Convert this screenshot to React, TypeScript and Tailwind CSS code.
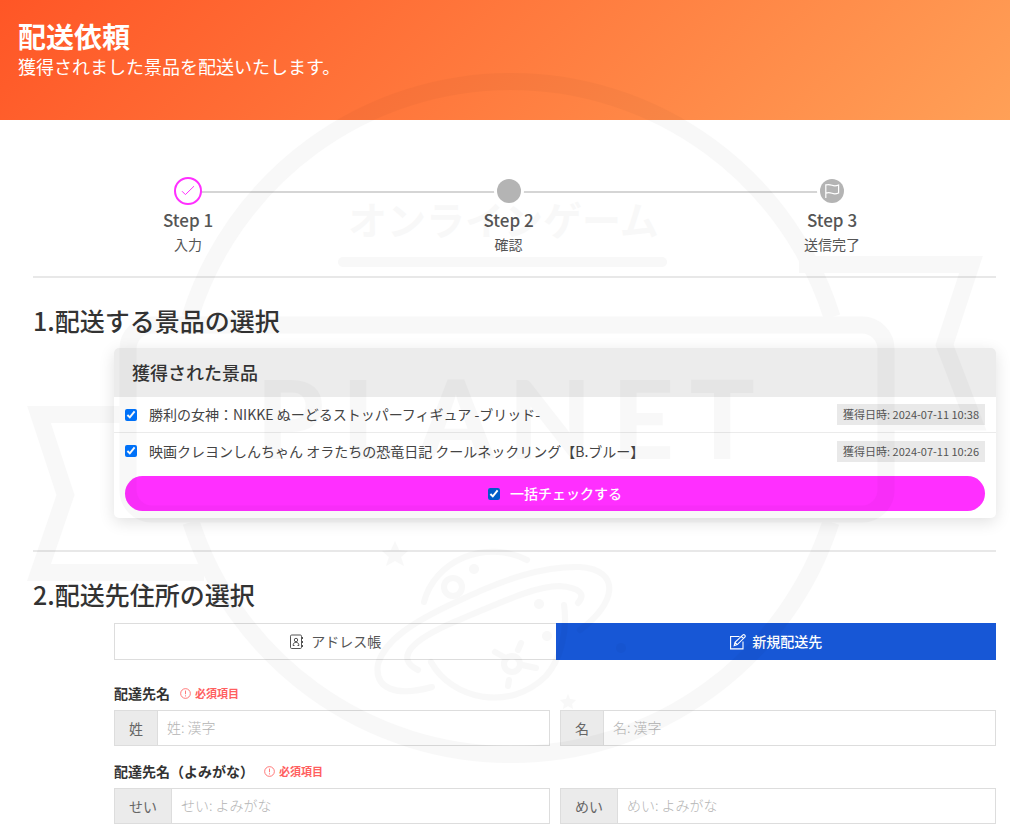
import React, { useState } from "react";

const prizes = [
  { id: "nikke", name: "勝利の女神：NIKKE ぬーどるストッパーフィギュア -ブリッド-", date: "2024-07-11 10:38" },
  { id: "shinchan", name: "映画クレヨンしんちゃん オラたちの恐竜日記 クールネックリング【B.ブルー】", date: "2024-07-11 10:26" },
];

const logoLetters = [
  { char: "P", x: 290 },
  { char: "L", x: 370 },
  { char: "A", x: 456 },
  { char: "N", x: 550 },
  { char: "E", x: 643 },
  { char: "T", x: 722 },
];

function CheckIcon() {
  return (
    <svg viewBox="0 0 16 16" className="size-4" fill="none" stroke="currentColor" strokeWidth="1">
      <path d="M2 8.200l3.400 3.400L14 3.200" />
    </svg>
  );
}

function FlagIcon() {
  return (
    <svg viewBox="0 0 16 16" className="size-4" fill="none" stroke="currentColor" strokeWidth="1.2">
      <path d="M1.800 15V1.200M1.800 2c2.400-.9 4.400-.4 6.200.3 1.900.7 4 .8 6.600-.3v8c-2.600 1.100-4.700 1-6.600.3-1.800-.7-3.800-1.100-6.200-.2" />
    </svg>
  );
}

function AddressBookIcon() {
  return (
    <svg viewBox="0 0 16 16" className="size-4" fill="none" stroke="currentColor" strokeWidth="1">
      <rect x="1.500" y="1" width="11" height="13.500" rx="1.200" />
      <circle cx="7" cy="6" r="1.700" />
      <path d="M4.100 11.500c0-2 1.100-3.200 2.900-3.200s2.900 1.200 2.900 3.200M4 11.500h1.500M8.500 11.500h1.500M13.500 3v2M13.500 7v2M13.500 11v2" />
    </svg>
  );
}

function EditIcon() {
  return (
    <svg viewBox="0 0 18 16" className="h-4 w-[18px]" fill="none" stroke="currentColor" strokeWidth="1.100">
      <path d="M10.500 2.500H1.600v12.400h12.400V7.500" />
      <path d="M5.200 11.600l.8-3.300 7.700-7.200c.7-.6 1.500-.5 2.100.1.600.6.600 1.400 0 2L8.300 10.600l-3.100 1zM12.300 2.400l2.200 2.200M6 8.300l2.300 2.300" />
    </svg>
  );
}

function AlertIcon() {
  return (
    <svg viewBox="0 0 12 12" className="size-[11px]" fill="none" stroke="currentColor" strokeWidth="0.9">
      <circle cx="6" cy="6" r="5.300" />
      <path d="M6 2.800v4M6 8v1.200" />
    </svg>
  );
}

function Watermark() {
  return (
    <svg viewBox="0 0 1010 836" className="pointer-events-none absolute left-0 top-0 z-10 h-auto w-full opacity-[0.022]" aria-hidden="true">
      <g fill="none" stroke="#000" strokeWidth="17">
        <path d="M190 317A336.500 336.500 0 0 1 832 317M191 522A336.500 336.500 0 0 0 831 522" />
        <rect x="128" y="325" width="758" height="189" rx="24" />
        <path d="M799 264.500H971L944.500 345L974 422H894" />
        <path d="M120 414.500H39L65.500 495L39 572.500H204" />
      </g>
      <rect x="338" y="257" width="329" height="10" rx="5" />
      <text x="348" y="235" className="font-['Noto_Sans_CJK_JP',sans-serif] text-[39px] font-bold">オンラインゲーム</text>
      {logoLetters.map((l) => (
        <text key={l.char} x={l.x} y="459" textAnchor="middle" className="font-[Lato,sans-serif] text-[108px] font-black">
          {l.char}
        </text>
      ))}
      {/* planet */}
      <g fill="none" stroke="#000" strokeWidth="6" strokeLinecap="round">
        <path d="M424 602C434 562 484 538 527 560" />
        <path d="M431 662C452 700 510 712 546 676C560 660 568 632 564 605" />
        <path d="M432 687C396 697 374 689 378 664C385 640 413 622 456 602C506 578 544 566 580 567C622 570 616 604 580 630" />
        <path d="M418 670C394 658 412 640 454 622C506 600 536 586 560 586C580 588 586 594 578 603" />
        <circle cx="453" cy="587" r="9" />
        <circle cx="512" cy="664" r="8" />
        <path d="M504 657L495 652M518 650L521 643M522 665L536 668M509 680L508 686" />
      </g>
      <circle cx="474" cy="569" r="5" />
      <circle cx="539" cy="604" r="5" />
      <circle cx="547" cy="636" r="5" />
      <circle cx="621" cy="648" r="5" />
      <path d="M395 541l4 9 9 1-7 6 3 9-9-5-9 5 3-9-7-6 9-1zM568 694l2 5 6 1-4 4 1 5-5-3-5 3 1-5-4-4 6-1z" />
    </svg>
  );
}

function Step({ title, label, children }: { title: string; label: string; children: React.ReactNode }) {
  return (
    <li className="flex flex-col items-center text-[#555]">
      <div className="relative z-[1] flex h-7 items-center">{children}</div>
      <div className="mt-px text-[17px] leading-7 font-medium">{title}</div>
      <div className="text-[14px] leading-5">{label}</div>
    </li>
  );
}

function StepLine() {
  return <li aria-hidden="true" className="-mx-4 mt-[14px] h-[2px] flex-1 bg-[#d5d5d5]" />;
}

function NameField({ id, addon, placeholder }: { id: string; addon: string; placeholder: string }) {
  return (
    <div className="flex h-9 min-w-0 flex-1 border border-[#ddd]">
      <label htmlFor={id} className="flex shrink-0 items-center border-r border-[#ddd] bg-[#ebebeb] px-[14px] text-[14px] text-[#666]">
        {addon}
      </label>
      <input id={id} type="text" placeholder={placeholder} className="min-w-0 flex-1 px-[9px] pb-[2px] text-[14px] font-light outline-none placeholder:text-[#b4b4b4]" />
    </div>
  );
}

function FieldTitle({ children }: { children: React.ReactNode }) {
  return (
    <legend className="flex h-6 items-center gap-[10px] text-[14px] font-bold text-[#333]">
      {children}
      <span className="flex items-center gap-1 text-[11px] text-[#ff5f5f]">
        <AlertIcon />
        必須項目
      </span>
    </legend>
  );
}

export default function App() {
  const [checked, setChecked] = useState<string[]>(prizes.map((p) => p.id));
  const allChecked = checked.length === prizes.length;

  const toggle = (id: string) => {
    setChecked(checked.includes(id) ? checked.filter((c) => c !== id) : [...checked, id]);
  };

  return (
    <div className="relative overflow-hidden bg-white font-['Noto_Sans_CJK_JP',sans-serif] text-[#333]">
      <header className="h-[120px] bg-[linear-gradient(135deg,#ff5626,#ffa057)] px-[18px] pt-4 text-white">
        <h1 className="text-[28px] leading-10 font-bold">配送依頼</h1>
        <p className="text-[18px] leading-5">獲得されました景品を配送いたします。</p>
      </header>

      <main className="pr-[14px] pb-3 pl-[33px]">
        <ol className="flex items-start pt-[57px] pr-[136px] pl-[130px]">
          <Step title="Step 1" label="入力">
            <span className="flex size-7 items-center justify-center rounded-full border-2 border-[#ff2fff] bg-white text-[#ff2fff]">
              <CheckIcon />
            </span>
          </Step>
          <StepLine />
          <Step title="Step 2" label="確認">
            <span className="size-6 rounded-full bg-[#b4b4b4] ring-3 ring-white" />
          </Step>
          <StepLine />
          <Step title="Step 3" label="送信完了">
            <span className="flex size-6 items-center justify-center rounded-full bg-[#b4b4b4] text-white ring-3 ring-white">
              <FlagIcon />
            </span>
          </Step>
        </ol>

        <hr className="mt-[22px] border-t-2 border-[#e8e8e8]" />

        <section className="pt-[22px]">
          <h2 className="text-[25px] leading-10 font-medium">1.配送する景品の選択</h2>
          <div className="mt-2 ml-[81px] overflow-hidden rounded-[5px] shadow-[0_4px_16px_rgba(0,0,0,0.12)]">
            <h3 className="bg-[#ececec] px-[18px] text-[18px] leading-[49px] font-medium">獲得された景品</h3>
            <ul className="divide-y divide-[#ebebeb]">
              {prizes.map((p) => (
                <li key={p.id} className="flex h-9 items-center justify-between px-[11px]">
                  <label className="flex items-center gap-3 text-[14px] text-[#444]">
                    <input type="checkbox" className="size-3" checked={checked.includes(p.id)} onChange={() => toggle(p.id)} />
                    {p.name}
                  </label>
                  <span className="bg-[#e9e9e9] px-[6px] text-[11px] leading-[21px] text-[#555]">獲得日時: {p.date}</span>
                </li>
              ))}
            </ul>
            <div className="px-[11px] py-[7px]">
              <label className="flex h-[35px] items-center justify-center gap-[10px] rounded-full bg-[#ff2fff] text-[14px] font-medium text-white">
                <input
                  type="checkbox"
                  className="size-3 accent-[#005cc8]"
                  checked={allChecked}
                  onChange={() => setChecked(allChecked ? [] : prizes.map((p) => p.id))}
                />
                一括チェックする
              </label>
            </div>
          </div>
        </section>

        <hr className="mt-8 border-t-2 border-[#e8e8e8]" />

        <section className="pt-[22px]">
          <h2 className="text-[25px] leading-10 font-medium">2.配送先住所の選択</h2>
          <div className="mt-[9px] ml-[81px]">
            <div className="flex h-[37px] text-[14px]">
              <button type="button" className="flex flex-1 items-center justify-center gap-[6px] border border-r-0 border-[#ddd] text-[#555]">
                <AddressBookIcon />
                アドレス帳
              </button>
              <button type="button" className="flex flex-1 items-center justify-center gap-[5px] bg-[#1757d6] font-medium text-white">
                <EditIcon />
                新規配送先
              </button>
            </div>

            <fieldset className="mt-[21px]">
              <FieldTitle>配達先名</FieldTitle>
              <div className="mt-[5px] flex gap-[10px]">
                <NameField id="sei" addon="姓" placeholder="姓: 漢字" />
                <NameField id="mei" addon="名" placeholder="名: 漢字" />
              </div>
            </fieldset>

            <fieldset className="mt-[13px]">
              <FieldTitle>配達先名（よみがな）</FieldTitle>
              <div className="mt-[5px] flex gap-[10px]">
                <NameField id="sei-kana" addon="せい" placeholder="せい: よみがな" />
                <NameField id="mei-kana" addon="めい" placeholder="めい: よみがな" />
              </div>
            </fieldset>
          </div>
        </section>
      </main>

      <Watermark />
    </div>
  );
}
